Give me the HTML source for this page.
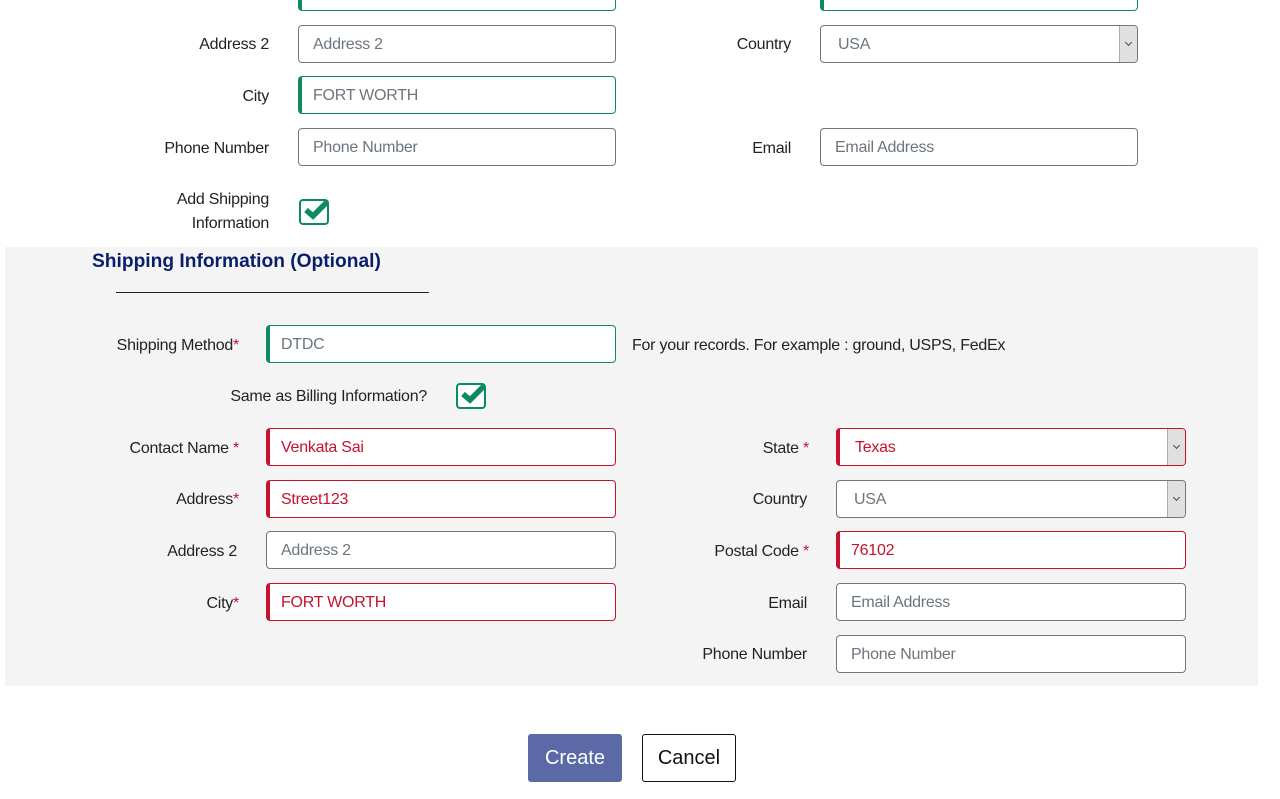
<!DOCTYPE html>
<html><head><style>
body{margin:0;width:1280px;height:799px;background:#fff;font-family:"Liberation Sans",sans-serif;position:relative;overflow:hidden;font-size:16px;color:#222}
.l{position:absolute;text-align:right;font-size:16px;color:#222;line-height:20px;letter-spacing:-0.25px;margin-top:2px}
.i{position:absolute;box-sizing:border-box;height:38px;border:1px solid #767676;border-radius:4px;background:#fff;padding-left:14px;line-height:38px;color:#6c757d;font-size:16px;letter-spacing:-0.25px}
.g{border-color:#0c8b63;border-left:4px solid #0c8b63;padding-left:11px}
.r{border-color:#c4122f;border-left:4px solid #c4122f;padding-left:11px;color:#c4122f}
.s::after{content:"";position:absolute;right:0;top:0;width:17px;height:36px;background:#e0e0e0;border-left:1px solid #aaa;border-radius:0 3px 3px 0}
.s::before{content:"";position:absolute;right:6px;top:14px;width:4px;height:4px;border-right:1px solid #444;border-bottom:1px solid #444;transform:rotate(45deg);z-index:2}
.st{color:#c4122f}
.cb{position:absolute;width:30px;height:26px;border:2px solid #0c8b63;border-radius:4px;box-sizing:border-box}
.cb svg{position:absolute;left:3px;top:-2px}
</style></head><body>
<div class="i g" style="left:298px;top:-27px;width:318px"></div>
<div class="i g" style="left:820px;top:-27px;width:318px"></div>
<div class="l" style="right:1011px;top:33px">Address 2</div>
<div class="i" style="left:298px;top:25px;width:318px">Address 2</div>
<div class="l" style="right:489px;top:33px">Country</div>
<div class="i s" style="left:820px;top:25px;width:318px;padding-left:17px">USA</div>
<div class="l" style="right:1011px;top:85px">City</div>
<div class="i g" style="left:298px;top:76px;width:318px">FORT WORTH</div>
<div class="l" style="right:1011px;top:137px">Phone Number</div>
<div class="i" style="left:298px;top:128px;width:318px">Phone Number</div>
<div class="l" style="right:489px;top:137px">Email</div>
<div class="i" style="left:820px;top:128px;width:318px">Email Address</div>
<div class="l" style="right:1011px;top:186px;line-height:24px">Add Shipping<br>Information</div>
<div class="cb" style="left:299px;top:199px;background:#fff"><svg width="28" height="22" viewBox="0 0 28 22"><path d="M2 11 L9 17 L23 3" stroke="#0c8b63" stroke-width="5.5" fill="none"/></svg></div>
<div style="position:absolute;left:5px;top:247px;width:1253px;height:439px;background:#f4f4f4"></div>
<div style="position:absolute;left:92px;top:251px;font-weight:bold;font-size:19.2px;color:#0a1f6b">Shipping Information (Optional)</div>
<div style="position:absolute;left:116px;top:292px;width:313px;height:1px;background:#222"></div>
<div class="l" style="right:1041px;top:334px">Shipping Method<span class="st">*</span></div>
<div class="i g" style="left:266px;top:325px;width:350px">DTDC</div>
<div class="l" style="left:632px;top:334px;text-align:left">For your records. For example : ground, USPS, FedEx</div>
<div class="l" style="right:853px;top:385px">Same as Billing Information?</div>
<div class="cb" style="left:456px;top:383px;background:#fff"><svg width="28" height="22" viewBox="0 0 28 22"><path d="M2 11 L9 17 L23 3" stroke="#0c8b63" stroke-width="5.5" fill="none"/></svg></div>
<div class="l" style="right:1041px;top:437px">Contact Name <span class="st">*</span></div>
<div class="i r" style="left:266px;top:428px;width:350px">Venkata Sai</div>
<div class="l" style="right:471px;top:437px">State <span class="st">*</span></div>
<div class="i r s" style="left:836px;top:428px;width:350px;padding-left:15px">Texas</div>
<div class="l" style="right:1041px;top:488px">Address<span class="st">*</span></div>
<div class="i r" style="left:266px;top:480px;width:350px">Street123</div>
<div class="l" style="right:473px;top:488px">Country</div>
<div class="i s" style="left:836px;top:480px;width:350px;padding-left:17px">USA</div>
<div class="l" style="right:1043px;top:540px">Address 2</div>
<div class="i" style="left:266px;top:531px;width:350px">Address 2</div>
<div class="l" style="right:471px;top:540px">Postal Code <span class="st">*</span></div>
<div class="i r" style="left:836px;top:531px;width:350px">76102</div>
<div class="l" style="right:1041px;top:592px">City<span class="st">*</span></div>
<div class="i r" style="left:266px;top:583px;width:350px">FORT WORTH</div>
<div class="l" style="right:473px;top:592px">Email</div>
<div class="i" style="left:836px;top:583px;width:350px">Email Address</div>
<div class="l" style="right:473px;top:643px">Phone Number</div>
<div class="i" style="left:836px;top:635px;width:350px">Phone Number</div>
<div style="position:absolute;left:528px;top:734px;width:94px;height:48px;background:#5b6aa6;border-radius:3px;color:#fff;font-size:20px;line-height:48px;text-align:center">Create</div>
<div style="position:absolute;left:642px;top:734px;width:94px;height:48px;box-sizing:border-box;border:1px solid #111;border-radius:3px;color:#111;font-size:20px;line-height:46px;text-align:center">Cancel</div>
</body></html>
